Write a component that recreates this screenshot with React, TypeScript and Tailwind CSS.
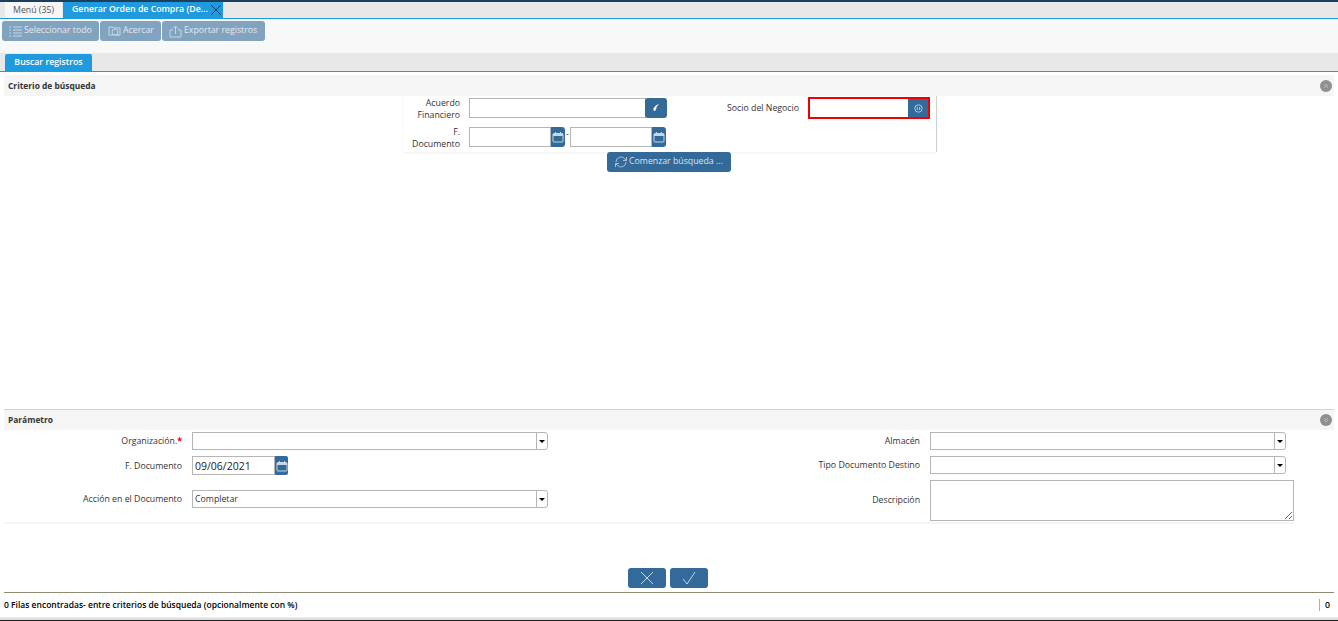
import React from "react";

function Calendar() {
  return (
    <svg width="12" height="12" viewBox="0 0 12 12" fill="none" stroke="#c5d8e8" strokeWidth="1">
      <rect x="1" y="2.500" width="10" height="8.500" rx="1" />
      <path d="M1 3h10v2H1z" fill="#c5d8e8" stroke="none" />
      <path d="M3.500 1v2M8.500 1v2" />
    </svg>
  );
}

function CalButton() {
  return (
    <button className="w-[14px] h-[20px] bg-[#336a99] rounded-r-[3px] flex items-center justify-center shrink-0">
      <Calendar />
    </button>
  );
}

function Caret() {
  return (
    <span className="w-[12px] h-[18px] border border-[#b5b5b5] rounded-r-[3px] flex items-center justify-center shrink-0 bg-white -ml-px">
      <span className="w-0 h-0 border-l-[3px] border-r-[3px] border-t-[3px] border-l-transparent border-r-transparent border-t-black" />
    </span>
  );
}

function Select({ width, value }: { width: string; value?: string }) {
  return (
    <div className={`flex ${width}`}>
      <div className="flex-1 h-[18px] border border-[#b5b5b5] bg-white px-[2px] leading-[17px] text-[#333]">
        {value}
      </div>
      <Caret />
    </div>
  );
}

function ToolButton({ icon, label, w, pl }: { icon: React.ReactNode; label: string; w: string; pl: string }) {
  return (
    <button className={`h-[20px] ${w} ${pl} bg-[#81a3c0] rounded-[3px] flex items-center gap-[2px] text-[#e3e9ef] shrink-0`}>
      {icon}
      <span>{label}</span>
    </button>
  );
}

function CircleIcon({ up }: { up?: boolean }) {
  return (
    <span className="w-[12px] h-[12px] rounded-full bg-[#8f8f8f] flex items-center justify-center">
      <svg width="6" height="6" viewBox="0 0 6 6" fill="none" stroke="#b5b5b5" strokeWidth="1">
        {up ? <path d="M1 3l2-2 2 2M1 5l2-2 2 2" /> : <path d="M1 1l2 2 2-2M1 3l2 2 2-2" />}
      </svg>
    </span>
  );
}

export default function App() {
  return (
    <div className="w-[1338px] h-[621px] overflow-hidden bg-white flex flex-col text-[#333] font-['Open_Sans',sans-serif] text-[8.750px]">
      <div className="h-[2px] bg-[#1c3f5e] shrink-0" />
      {/* Tabs */}
      <div className="h-[16px] bg-[#e8e8e8] flex items-end pl-[5px] gap-[1px] shrink-0">
        <div className="w-[57px] h-[16px] bg-[#f6f6f6] text-[#555] text-center leading-[16px]">Menú (35)</div>
        <div className="w-[160px] h-[16px] bg-[#1f9ade] text-white flex items-center pl-[9px] pr-[1px] justify-between">
          <span className="font-semibold whitespace-nowrap">Generar Orden de Compra (De...</span>
          <svg width="12" height="12" viewBox="0 0 12 12" stroke="#1c3f5e" strokeWidth="1" className="shrink-0">
            <path d="M1 1l10 10M11 1L1 11" />
          </svg>
        </div>
      </div>
      <div className="h-[1px] bg-[#1f9ade] shrink-0" />
      {/* Toolbar */}
      <div className="h-[34px] bg-[#f8f8f8] flex items-start pt-[2px] pl-[2px] gap-[1px] shrink-0">
        <ToolButton
          w="w-[97px]"
          pl="pl-[7px]"
          label="Seleccionar todo"
          icon={
            <svg width="13" height="12" viewBox="0 0 13 12" fill="none" stroke="#c9d6e2" strokeWidth="1">
              <path d="M0 2h2M4 2h9M0 5h2M4 5h9M0 8h2M4 8h9M0 11h2M4 11h9" />
            </svg>
          }
        />
        <ToolButton
          w="w-[61px]"
          pl="pl-[8px]"
          label="Acercar"
          icon={
            <svg width="13" height="12" viewBox="0 0 13 12" fill="none" stroke="#c9d6e2" strokeWidth="1">
              <path d="M1 10V2h4l1 1h6v7z" />
              <circle cx="7" cy="7" r="3" />
              <path d="M9 9l2 2" />
            </svg>
          }
        />
        <ToolButton
          w="w-[103px]"
          pl="pl-[7px]"
          label="Exportar registros"
          icon={
            <svg width="13" height="13" viewBox="0 0 13 13" fill="none" stroke="#c9d6e2" strokeWidth="1">
              <path d="M4 5H1v7h11V5H9M6.500 9V1M4 3.500L6.500 1 9 3.500" />
            </svg>
          }
        />
      </div>
      {/* Sub tab */}
      <div className="h-[18px] bg-[#e8e8e8] pl-[5px] flex items-end shrink-0">
        <div className="w-[87px] h-[17px] bg-[#1f9ade] rounded-t-[2px] text-white font-semibold text-center leading-[17px]">
          Buscar registros
        </div>
      </div>
      <div className="h-[1px] bg-[#1f9ade] shrink-0" />

      <div className="flex-1 flex flex-col px-[4px] pt-[3px] min-h-0">
        {/* Criteria */}
        <div className="h-[21px] bg-[#f5f5f5] flex items-center justify-between pl-[4px] pr-[2px] shrink-0">
          <span className="font-bold text-[8.400px] text-[#333] pt-[1px]">Criterio de búsqueda</span>
          <CircleIcon up />
        </div>
        <div className="h-[313px] shrink-0">
          <div className="w-[534px] h-[56px] ml-[399px] border-r border-[#d0d0d0] shadow-[0_1px_2px_rgba(0,0,0,0.06)] flex">
            <div className="w-[57px] shrink-0 text-right text-[#333] leading-[12px]">
              <div className="h-[30px] pt-[1px]">Acuerdo<br />Financiero</div>
              <div>F.<br />Documento</div>
            </div>
            <div className="w-[198px] ml-[9px] shrink-0 pt-[2px]">
              <div className="flex h-[20px]">
                <div className="w-[177px] h-[20px] border border-[#b5b5b5] bg-white" />
                <button className="w-[22px] h-[20px] -ml-px bg-[#336a99] rounded-[3px] flex items-center justify-center">
                  <svg width="8" height="8" viewBox="0 0 9 9" fill="#fff">
                    <path d="M8 0C5 1 2 3 1.500 6 1.300 7 2 8 3.500 8 4 6.500 4.500 5.500 5 5 4.500 4.500 5 3 8 0z" />
                  </svg>
                </button>
              </div>
              <div className="flex items-start mt-[9px] h-[20px]">
                <div className="w-[82px] h-[20px] border border-[#b5b5b5] bg-white" />
                <CalButton />
                <span className="w-[5px] text-center leading-[14px]">-</span>
                <div className="w-[82px] h-[20px] border border-[#b5b5b5] bg-white" />
                <CalButton />
              </div>
            </div>
            <div className="w-[132px] shrink-0 text-right pt-[6px] text-[#333] whitespace-nowrap">Socio del Negocio</div>
            <div className="ml-[9px] mt-[1px] w-[122px] h-[22px] border-2 border-[#f00000] flex shrink-0">
              <div className="flex-1" />
              <div className="w-[20px] bg-[#336a99] flex items-center justify-center">
                <svg width="9" height="9" viewBox="0 0 9 9" fill="none" stroke="#b7cbdc" strokeWidth="1">
                  <circle cx="4.500" cy="4.500" r="3.700" />
                  <path d="M3.300 3v3M5.700 3v3" />
                </svg>
              </div>
            </div>
          </div>
          <button className="ml-[603px] w-[124px] h-[20px] bg-[#336a99] rounded-[3px] flex items-center pl-[7px] gap-[1px] text-[#dbe5ee]">
            <svg width="14" height="14" viewBox="0 0 14 14" fill="none" stroke="#a9c0d4" strokeWidth="1">
              <path d="M2 7a5 5 0 0 1 9-3l1.500 1.500M12 7a5 5 0 0 1-9 3L1.500 8.500M12.500 2v3.500H9M1.500 12V8.500H5" />
            </svg>
            <span>Comenzar búsqueda ...</span>
          </button>
        </div>

        {/* Parameters */}
        <div className="h-[21px] bg-[#f5f5f5] border-t border-[#d5d5d0] flex items-center justify-between pl-[4px] pr-[2px] shrink-0">
          <span className="font-bold text-[8.400px] text-[#333] pt-[1px]">Parámetro</span>
          <CircleIcon />
        </div>
        <div className="h-[94px] w-[1290px] shrink-0 border-b-2 border-[#f5f5f5] flex pt-[2px]">
          <div className="w-[544px] shrink-0 flex flex-col">
            <div className="flex items-center h-[18px]">
              <div className="w-[178px] text-right pt-[1px]">
                Organización.<span className="text-[#e00000] font-bold">*</span>
              </div>
              <Select width="w-[356px] ml-[10px]" />
            </div>
            <div className="flex items-center h-[19px] mt-[6px]">
              <div className="w-[178px] text-right pt-[2px]">F. Documento</div>
              <div className="ml-[10px] w-[83px] h-[19px] border border-[#b5b5b5] bg-white px-[2px] text-[10.500px] leading-[18px] text-[#222]">
                09/06/2021
              </div>
              <span className="w-[13px] h-[19px] bg-[#336a99] rounded-r-[2px] flex items-center justify-center">
                <Calendar />
              </span>
            </div>
            <div className="flex items-center h-[18px] mt-[15px]">
              <div className="w-[178px] text-right pt-[1px]">Acción en el Documento</div>
              <Select width="w-[356px] ml-[10px]" value="Completar" />
            </div>
          </div>
          <div className="flex-1 flex flex-col">
            <div className="flex items-center h-[18px]">
              <div className="w-[372px] text-right pt-[1px]">Almacén</div>
              <Select width="w-[356px] ml-[10px]" />
            </div>
            <div className="flex items-center h-[18px] mt-[6px]">
              <div className="w-[372px] text-right pt-[1px]">Tipo Documento Destino</div>
              <Select width="w-[356px] ml-[10px]" />
            </div>
            <div className="flex items-center mt-[6px]">
              <div className="w-[372px] text-right">Descripción</div>
              <textarea
                readOnly
                className="ml-[10px] w-[364px] h-[41px] border border-[#b5b5b5] bg-white outline-none"
              />
            </div>
          </div>
        </div>

        {/* Action buttons */}
        <div className="h-[20px] flex justify-center gap-[4px] shrink-0 mt-[44px] ml-[-3px]">
          <button className="w-[38px] h-[20px] bg-[#336a99] rounded-[3px] flex items-center justify-center">
            <svg width="16" height="14" viewBox="0 0 16 14" fill="none" stroke="#c5d6e4" strokeWidth="1">
              <path d="M2 1l12 12M14 1L2 13" />
            </svg>
          </button>
          <button className="w-[38px] h-[20px] bg-[#336a99] rounded-[3px] flex items-center justify-center">
            <svg width="16" height="14" viewBox="0 0 16 14" fill="none" stroke="#c5d6e4" strokeWidth="1">
              <path d="M2 8l4 5L14 1" />
            </svg>
          </button>
        </div>
        <div className="h-[1px] bg-[#8f8a72] mt-[4px] shrink-0" />
        <div className="flex-1 flex items-center justify-between min-h-0">
          <span className="font-semibold text-[8.500px] text-black">0 Filas encontradas- entre criterios de búsqueda (opcionalmente con %)</span>
          <span className="font-semibold text-black border-l border-[#8fb6e0] pl-[5px] pr-[5px] mr-[-1px] leading-[12px]">0</span>
        </div>
      </div>
      <div className="h-[3px] bg-gradient-to-b from-[#f0f0f0] to-[#d5d5d5] shrink-0" />
      <div className="h-[1px] bg-[#222] shrink-0" />
    </div>
  );
}
